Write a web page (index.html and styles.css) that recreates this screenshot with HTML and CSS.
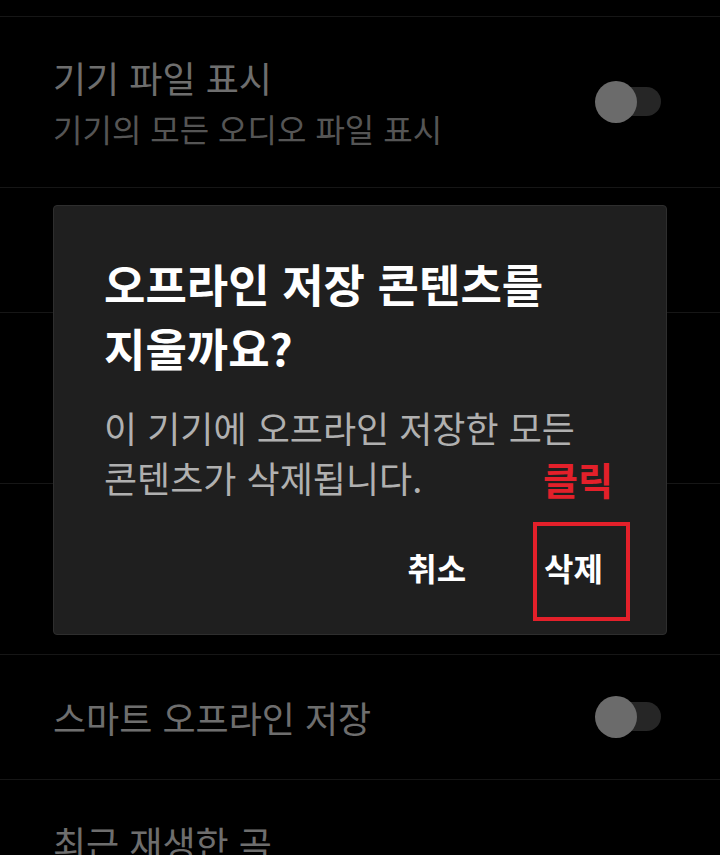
FILE: index.html
```html
<!DOCTYPE html>
<html lang="ko">
<head>
<meta charset="utf-8">
<title>설정</title>
<link rel="stylesheet" href="styles.css">
</head>
<body>
<main class="settings">
  <div class="row row-cut"></div>
  <div class="row row-tall">
    <div class="texts">
      <div class="label">기기 파일 표시</div>
      <div class="sub">기기의 모든 오디오 파일 표시</div>
    </div>
    <div class="toggle"><span class="track"></span><span class="knob"></span></div>
  </div>
  <div class="row"></div>
  <div class="row row-tall"></div>
  <div class="row row-tall"></div>
  <div class="row">
    <div class="texts"><div class="label">스마트 오프라인 저장</div></div>
    <div class="toggle"><span class="track"></span><span class="knob"></span></div>
  </div>
  <div class="row">
    <div class="texts"><div class="label">최근 재생한 곡</div></div>
  </div>
</main>

<div class="scrim"></div>

<section class="dialog" role="dialog">
  <h1 class="dialog-title">오프라인 저장 콘텐츠를<br>지울까요?</h1>
  <p class="dialog-body">이 기기에 오프라인 저장한 모든<br>콘텐츠가 삭제됩니다.</p>
  <div class="actions">
    <button class="btn">취소</button>
    <button class="btn">삭제</button>
  </div>
  <div class="note">클릭</div>
  <div class="highlight"></div>
</section>
</body>
</html>
```
FILE: styles.css
```css
html, body {
  margin: 0;
  padding: 0;
  background: #000;
  height: 855px;
  overflow: hidden;
}
body {
  font-family: "Noto Sans CJK KR", "Noto Sans", sans-serif;
  color: #dcdcdc;
}
.settings {
  display: flex;
  flex-direction: column;
}
.row {
  display: flex;
  align-items: center;
  justify-content: space-between;
  height: 124px;
  padding: 0 59px 0 53px;
  border-bottom: 1px solid #2c2c2c;
  flex-shrink: 0;
}
.row-cut { height: 16px; }
.row-tall { height: 170px; }
.texts {
  display: flex;
  flex-direction: column;
  gap: 4px;
}
.label {
  font-size: 36px;
  line-height: 48px;
  color: #dcdcdc;
  white-space: nowrap;
}
.sub {
  font-size: 32px;
  line-height: 46px;
  color: #aaaaaa;
  white-space: nowrap;
}
.toggle {
  position: relative;
  width: 66px;
  height: 42px;
  flex-shrink: 0;
}
.track {
  position: absolute;
  right: 0;
  top: 6px;
  width: 57px;
  height: 29px;
  border-radius: 15px;
  background: #4c4c4c;
}
.knob {
  position: absolute;
  left: 0;
  top: 0;
  width: 42px;
  height: 42px;
  border-radius: 50%;
  background: #d6d6d6;
}
.scrim {
  position: fixed;
  inset: 0;
  background: rgba(0, 0, 0, 0.5);
}
.dialog {
  position: fixed;
  top: 205px;
  left: 53px;
  width: 614px;
  height: 430px;
  box-sizing: border-box;
  padding: 46px 50px 0;
  background: #1f1f1f;
  border: 1px solid #2e2e2e;
  border-radius: 4px;
}
.dialog-title {
  margin: 0;
  font-size: 45px;
  line-height: 64px;
  font-weight: 700;
  color: #ffffff;
  white-space: nowrap;
}
.dialog-body {
  margin: 22px 0 0;
  font-size: 36px;
  line-height: 50px;
  color: #b0b0b0;
  white-space: nowrap;
}
.actions {
  display: flex;
  justify-content: flex-end;
  gap: 42px;
  margin-top: 40px;
  margin-right: -5px;
}
.btn {
  font-family: inherit;
  font-size: 32px;
  line-height: 50px;
  font-weight: 700;
  color: #ffffff;
  background: none;
  border: 0;
  padding: 0 18px;
}
.note {
  position: absolute;
  left: 489px;
  top: 248px;
  font-size: 38px;
  line-height: 50px;
  font-weight: 700;
  color: #e3202a;
}
.highlight {
  position: absolute;
  left: 479px;
  top: 316px;
  width: 97px;
  height: 99px;
  box-sizing: border-box;
  border: 4px solid #e3202a;
}
```
